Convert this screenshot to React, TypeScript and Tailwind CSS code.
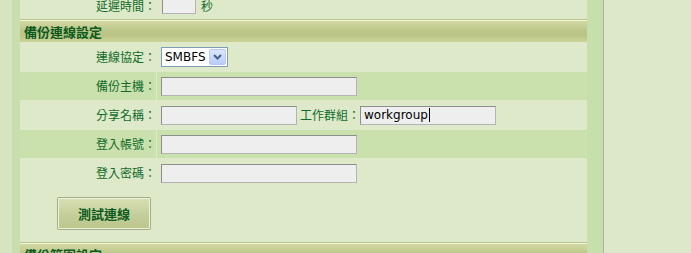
import React from "react";

const cjk = { fontFamily: '"Noto Sans CJK TC", "Noto Sans CJK SC", sans-serif' };
const latin = { fontFamily: '"DejaVu Sans", Verdana, sans-serif' };

function TextBox({ w, value }: { w: string; value?: string }) {
  return (
    <div
      className={`${w} h-[19px] shrink-0 bg-[#eeeeee] border border-[#b4b4b4] border-t-[#8e8e8e] border-l-[#8e8e8e] flex items-center pl-[3px] text-[12px] text-black leading-none`}
      style={latin}
    >
      {value}
      {value ? <span className="inline-block w-[1px] h-[14px] bg-black ml-[1px]" /> : null}
    </div>
  );
}

function Row({
  label,
  dark,
  children,
}: {
  label: string;
  dark?: boolean;
  children: React.ReactNode;
}) {
  const bg = dark ? "bg-[#cae0ad]" : "bg-[#dde9c8]";
  return (
    <div className="flex h-[28px] shrink-0 gap-[1px]">
      <div
        className={`w-[136px] ${bg} flex items-center justify-end text-[12px] text-[#116b2c]`}
        style={cjk}
      >
        {label}
      </div>
      <div className={`flex-1 ${bg} flex items-center pl-[4px]`}>{children}</div>
    </div>
  );
}

function Header({ title }: { title: string }) {
  return (
    <div className="flex flex-col shrink-0">
      <div className="h-[1px] bg-[#b9c594]" />
      <div className="h-[1px] bg-[#f2f5d2]" />
      <div
        className="h-[21px] flex items-center pl-[4px] text-[13px] font-bold text-[#0b5a1e] bg-[linear-gradient(to_bottom,#d3d9a3_0%,#bcc689_45%,#b9c385_65%,#ccd398_100%)]"
        style={cjk}
      >
        {title}
      </div>
    </div>
  );
}

export default function App() {
  return (
    <div className="w-[691px] h-[253px] overflow-hidden flex bg-[#dce8c9]">
      <div className="w-[12px] bg-[#d6e5c0]" />
      <div className="w-[8px] bg-[#c8deac]" />
      <div className="w-[567px] flex flex-col bg-[#dde9c8] -mt-[10px]">
        {/* top row */}
        <div className="flex h-[29px] shrink-0">
          <div
            className="w-[136px] flex items-center justify-end pt-[3px] text-[12px] text-[#116b2c]"
            style={cjk}
          >
            延遲時間：
          </div>
          <div className="flex-1 flex items-center pl-[5px] ml-[1px]">
            <TextBox w="w-[34px]" />
            <span className="ml-[5px] pt-[3px] text-[12px] text-[#116b2c]" style={cjk}>
              秒
            </span>
          </div>
        </div>
        <Header title="備份連線設定" />
        <div className="flex flex-col gap-[1px] mt-[1px] shrink-0">
          <Row label="連線協定：">
            <div className="w-[67px] h-[20px] bg-white border border-[#7f9db9] flex items-center justify-between pl-[3px] pr-[1px] -mt-[1px]">
              <span className="text-[12px] text-black leading-none" style={latin}>
                SMBFS
              </span>
              <div className="w-[17px] h-[16px] rounded-[2px] border border-[#b7c9f5] bg-[linear-gradient(to_bottom,#dce6fe,#b9cdfb)] flex items-center justify-center">
                <svg width="9" height="6" viewBox="0 0 9 6">
                  <path d="M1 1 L4.5 4.5 L8 1" stroke="#4d6185" strokeWidth="2" fill="none" />
                </svg>
              </div>
            </div>
          </Row>
          <Row label="備份主機：" dark>
            <TextBox w="w-[196px]" />
          </Row>
          <Row label="分享名稱：">
            <TextBox w="w-[136px]" />
            <span className="ml-[3px] w-[60px] shrink-0 text-[12px] text-[#116b2c]" style={cjk}>
              工作群組：
            </span>
            <TextBox w="w-[136px]" value="workgroup" />
          </Row>
          <Row label="登入帳號：" dark>
            <TextBox w="w-[196px]" />
          </Row>
          <Row label="登入密碼：">
            <TextBox w="w-[196px]" />
          </Row>
        </div>
        <div className="h-[55px] shrink-0 pt-[10px] pl-[37px]">
          <button
            className="w-[94px] h-[33px] border border-[#a5ad88] rounded-[2px] p-0 bg-[#c5cf9b]"
            style={cjk}
          >
            <div className="w-full h-full border border-[#eef2dc] rounded-[1px] flex items-center justify-center bg-[linear-gradient(to_bottom,#d7dfb2,#c3cd98_60%,#bcc78e)] text-[13px] font-bold text-[#0b5a1e]">
              測試連線
            </div>
          </button>
        </div>
        <Header title="備份範圍設定" />
      </div>
      <div className="w-[16px] bg-[#c7dfab]" />
      <div className="w-[1px] bg-[#a9b89b]" />
      <div className="flex-1 bg-[#dce8c9]" />
    </div>
  );
}
